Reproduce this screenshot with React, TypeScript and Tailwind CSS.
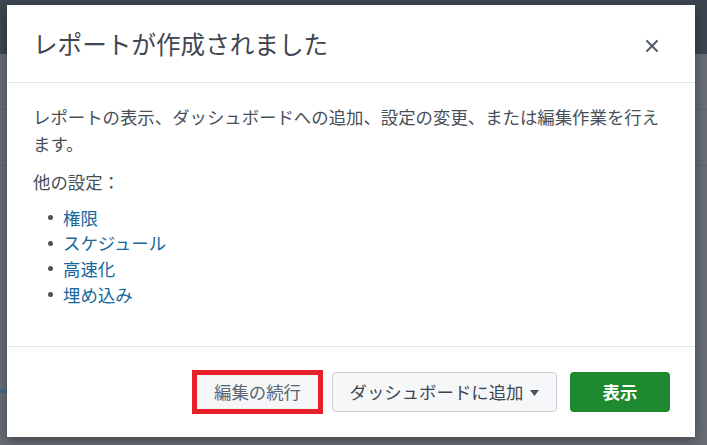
import { X } from 'lucide-react';

const otherSettings = ['権限', 'スケジュール', '高速化', '埋め込み'];

function Backdrop() {
  // faded page behind the dialog
  return (
    <div className="absolute inset-0 flex flex-col bg-[#686d74]">
      <div className="h-[54px] bg-[#3d4550]" />
      <div className="flex flex-1 flex-col">
        <div className="h-[56px] border-b border-[#5f646b]" />
        <div className="h-[56px] border-b border-[#5f646b]" />
        <div className="flex-1" />
        <div className="h-[4px] w-[20px] bg-[#3f6a86]" />
        <div className="h-[52px]" />
      </div>
    </div>
  );
}

export default function App() {
  return (
    <div
      className="relative h-[445px] w-[707px] overflow-hidden"
      style={{ fontFamily: '"Noto Sans CJK JP", "Noto Sans", sans-serif' }}
    >
      <Backdrop />

      <div className="absolute left-[7px] top-[5px] flex h-[432px] w-[688px] flex-col bg-white shadow-[0_4px_12px_rgba(0,0,0,0.35)]">
        {/* header */}
        <div className="flex h-[78px] items-center justify-between border-b border-[#e3e5e8] pl-[26px] pr-[33px]">
          <h2 className="text-[24.6px] font-normal leading-none text-[#3f4650]">
            レポートが作成されました
          </h2>
          <button type="button" className="mt-[4px] text-[#59616c]">
            <X size={20} strokeWidth={2.6} />
          </button>
        </div>

        {/* body */}
        <div className="flex-1 pl-[26px] pr-[26px] pt-[20px] text-[17.4px] text-[#474f59]">
          <p className="leading-[27px]">
            レポートの表示、ダッシュボードへの追加、設定の変更、または編集作業を行えます。
          </p>
          <p className="mt-[11px] leading-[27px]">他の設定：</p>
          <ul className="mt-[10px] pl-[15px]">
            {otherSettings.map((item) => (
              <li key={item} className="flex h-[25.6px] items-center">
                <span className="mr-[10px] h-[5px] w-[5px] rounded-full bg-[#4a525c]" />
                <a href="#" className="text-[#14689c]">
                  {item}
                </a>
              </li>
            ))}
          </ul>
        </div>

        {/* footer */}
        <div className="flex h-[91px] items-center justify-end border-t border-[#e3e5e8] pr-[25px]">
          <div className="border-[5px] border-[#e8202a]">
            <button
              type="button"
              className="flex h-[34px] w-[121px] items-center justify-center bg-[#f4f6f8] text-[17.4px] text-[#5c6470]"
            >
              編集の続行
            </button>
          </div>
          <button
            type="button"
            className="ml-[9px] flex h-[40px] w-[225px] items-center justify-center gap-[7px] rounded-[4px] border border-[#c9ced4] bg-[#f5f7f9] text-[17.4px] text-[#3d4550]"
          >
            ダッシュボードに追加
            <svg width="9" height="6" viewBox="0 0 9 6" className="mt-[1px]">
              <path d="M0 0 H9 L4.5 6 Z" fill="#4a525c" />
            </svg>
          </button>
          <button
            type="button"
            className="ml-[13px] flex h-[40px] w-[100px] items-center justify-center rounded-[4px] bg-[#1e8a2f] text-[17.4px] font-bold text-white"
          >
            表示
          </button>
        </div>
      </div>
    </div>
  );
}
